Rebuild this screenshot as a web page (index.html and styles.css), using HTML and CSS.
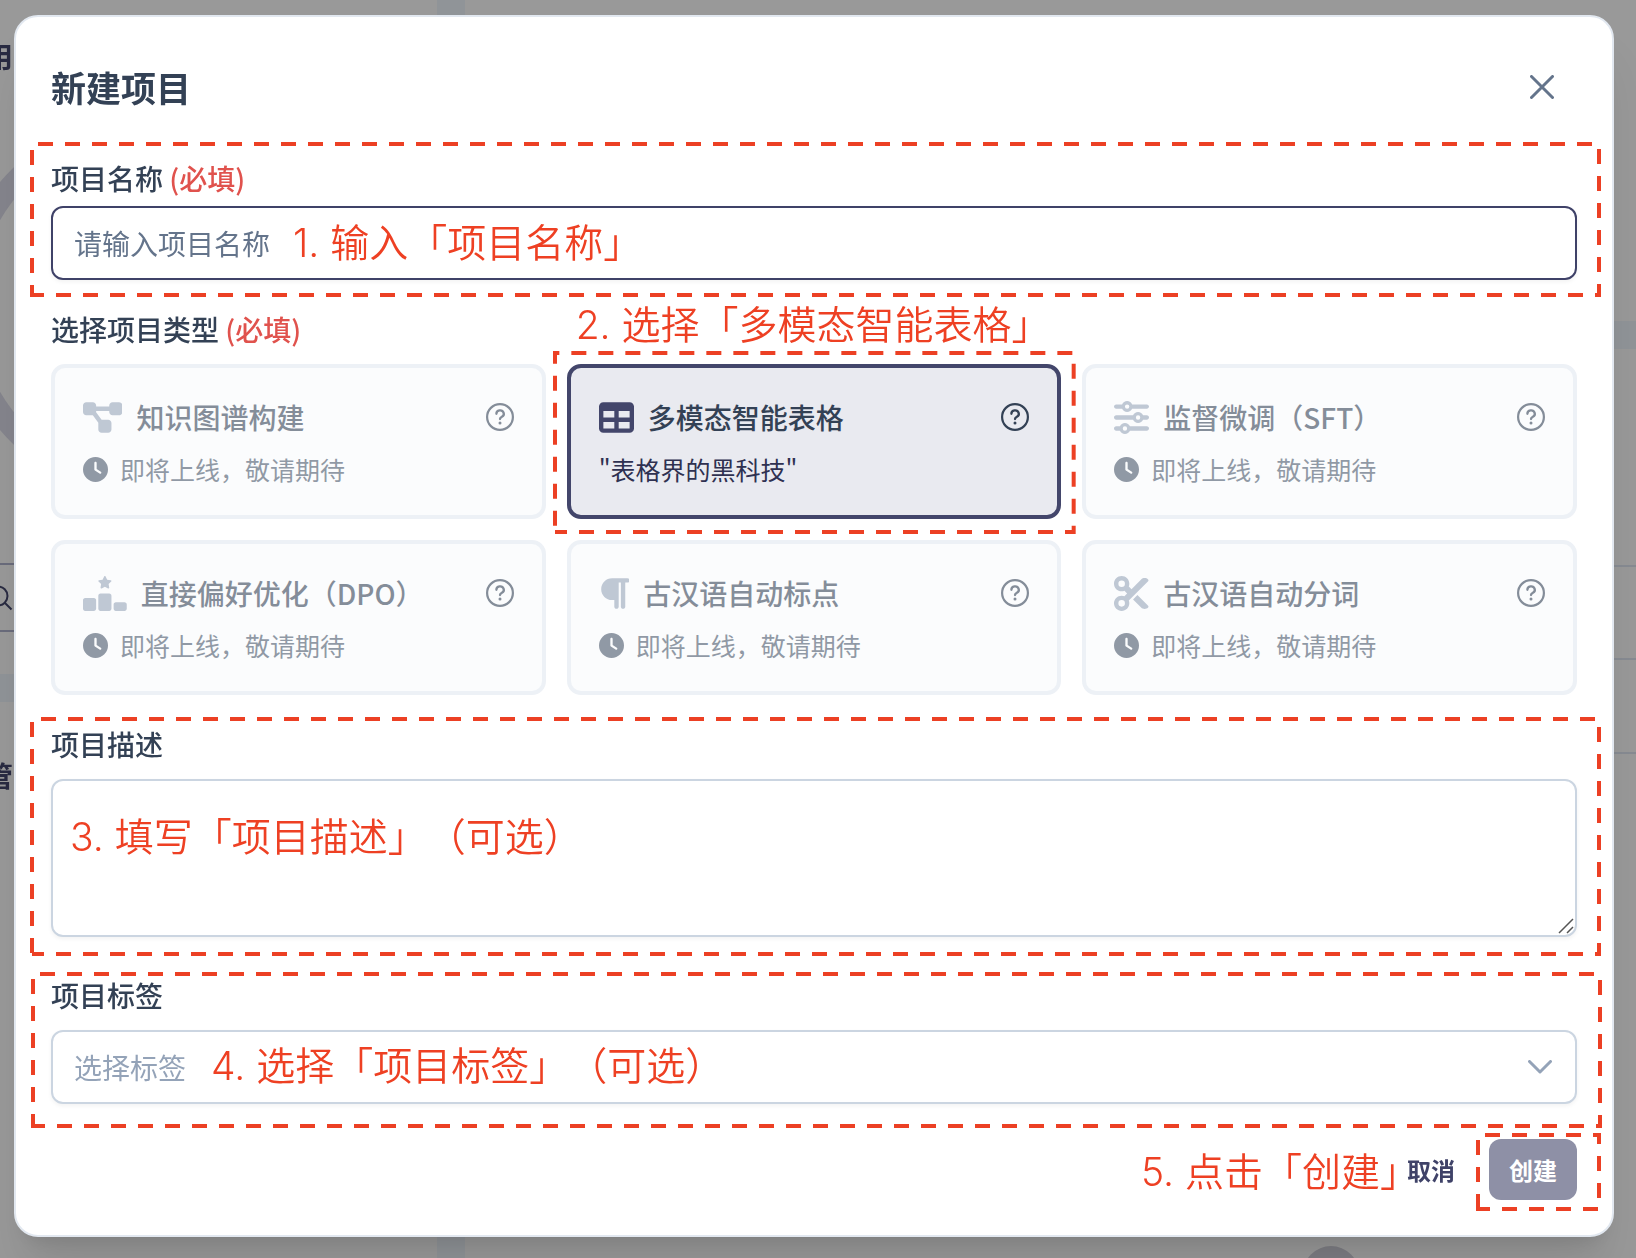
FILE: index.html
```
<!DOCTYPE html>
<html lang="zh-CN">
<head>
    <meta charset="UTF-8">
    <meta name="viewport" content="width=device-width, initial-scale=1.0">
    <title>新建项目</title>
    <link rel="stylesheet" href="styles.css">
</head>
<body>

    <!-- Page behind the dialog -->
    <div class="backdrop" aria-hidden="true">
        <span class="column-gap"></span>
        <span class="ring"></span>
        <span class="left-strip"></span>
        <span class="right-strip"></span>
        <span class="right-line line-one"></span>
        <span class="right-line line-two"></span>
        <span class="right-line line-three"></span>
        <span class="search-box">
            <svg viewBox="0 0 28 28"><circle cx="12" cy="12" r="9.500"/><path d="M18.500 18.500L25.500 25.500"/></svg>
        </span>
        <span class="back-text text-top">用</span>
        <span class="back-text text-middle">管</span>
        <span class="round-button"></span>
    </div>

    <!-- Shared icons -->
    <svg class="sprite" aria-hidden="true">
        <symbol id="icon-help" viewBox="0 0 14 14">
            <path d="M7 .55a6.450 6.450 0 1 0 0 12.900a6.450 6.450 0 0 0 0-12.900z" fill="none" stroke="currentColor" stroke-width="1.100"/>
            <path d="M5.200 5.400a1.850 1.700 0 1 1 2.750 1.450c-.650.350-.950.600-.950 1.200" fill="none" stroke="currentColor" stroke-width="1.150" stroke-linecap="round"/>
            <circle cx="7" cy="10" r=".75" fill="currentColor"/>
        </symbol>
        <symbol id="icon-clock" viewBox="0 0 512 512">
            <path fill="currentColor" d="M256 0a256 256 0 1 1 0 512A256 256 0 1 1 256 0zM232 120V256c0 8 4 15.500 10.700 20l96 64c11 7.400 25.900 4.400 33.300-6.700s4.400-25.900-6.700-33.300L280 243.200V120c0-13.300-10.700-24-24-24s-24 10.700-24 24z"/>
        </symbol>
    </svg>

    <div class="dialog" role="dialog" aria-labelledby="dialogTitle">
        <div class="dialog-header">
            <h2 id="dialogTitle">新建项目</h2>
            <button type="button" class="close-button" aria-label="关闭">
                <svg viewBox="0 0 24 24"><path d="M1.500 1.500L22.500 22.500M22.500 1.500L1.500 22.500"/></svg>
            </button>
        </div>

        <form class="dialog-form">
            <div class="field name-field">
                <label for="project-name">项目名称 <span class="required">(必填)</span></label>
                <input type="text" id="project-name" name="project-name" placeholder="请输入项目名称">
                <svg class="outline outline-name"><rect width="100%" height="100%"/></svg>
                <span class="note note-name">1. 输入「项目名称」</span>
            </div>

            <div class="field">
                <span class="label" id="typeLabel">选择项目类型 <span class="required">(必填)</span></span>
                <div class="type-grid" role="group" aria-labelledby="typeLabel">
                    <button type="button" class="type-card disabled">
                        <span class="card-title">
                            <svg class="card-icon" viewBox="0 0 576 512"><path d="M0 80C0 53.500 21.500 32 48 32h96c26.500 0 48 21.500 48 48V96H384V80c0-26.500 21.500-48 48-48h96c26.500 0 48 21.500 48 48v96c0 26.500-21.500 48-48 48H432c-26.500 0-48-21.500-48-48V160H192v16c0 1.700-.1 3.400-.3 5L272 288h96c26.500 0 48 21.500 48 48v96c0 26.500-21.500 48-48 48H272c-26.500 0-48-21.500-48-48V336c0-1.700 .1-3.400 .3-5L144 224H48c-26.500 0-48-21.500-48-48V80z"/></svg>
                            <span>知识图谱构建</span>
                            <svg class="help"><use href="#icon-help"/></svg>
                        </span>
                        <span class="card-text"><svg class="clock"><use href="#icon-clock"/></svg>即将上线，敬请期待</span>
                    </button>

                    <div class="highlight">
                        <button type="button" class="type-card selected">
                            <span class="card-title">
                                <svg class="card-icon" viewBox="0 0 512 512"><path d="M64 256V160H224v96H64zm0 64H224v96H64V320zm224 96V320H448v96H288zM448 256H288V160H448v96zM64 32C28.700 32 0 60.700 0 96V416c0 35.300 28.700 64 64 64H448c35.300 0 64-28.700 64-64V96c0-35.300-28.700-64-64-64H64z"/></svg>
                                <span>多模态智能表格</span>
                                <svg class="help"><use href="#icon-help"/></svg>
                            </span>
                            <span class="card-text">"表格界的黑科技"</span>
                        </button>
                        <svg class="outline outline-card"><rect width="100%" height="100%"/></svg>
                        <span class="note note-type">2. 选择「多模态智能表格」</span>
                    </div>

                    <button type="button" class="type-card disabled">
                        <span class="card-title">
                            <svg class="card-icon" viewBox="0 0 512 512"><path d="M0 416c0 17.700 14.300 32 32 32l54.700 0c12.300 28.300 40.500 48 73.300 48s61-19.700 73.300-48L480 448c17.700 0 32-14.300 32-32s-14.300-32-32-32l-246.700 0c-12.300-28.300-40.500-48-73.300-48s-61 19.700-73.300 48L32 384c-17.700 0-32 14.300-32 32zm128 0a32 32 0 1 1 64 0 32 32 0 1 1 -64 0zM320 256a32 32 0 1 1 64 0 32 32 0 1 1 -64 0zm32-80c-32.800 0-61 19.700-73.300 48L32 224c-17.700 0-32 14.300-32 32s14.300 32 32 32l246.700 0c12.300 28.300 40.500 48 73.300 48s61-19.700 73.300-48l54.700 0c17.700 0 32-14.300 32-32s-14.300-32-32-32l-54.700 0c-12.300-28.300-40.500-48-73.300-48zM192 128a32 32 0 1 1 0-64 32 32 0 1 1 0 64zm73.300-64C253 35.700 224.800 16 192 16s-61 19.700-73.300 48L32 64C14.300 64 0 78.300 0 96s14.300 32 32 32l86.700 0c12.300 28.300 40.500 48 73.300 48s61-19.700 73.300-48L480 128c17.700 0 32-14.300 32-32s-14.300-32-32-32L265.300 64z"/></svg>
                            <span>监督微调（SFT）</span>
                            <svg class="help"><use href="#icon-help"/></svg>
                        </span>
                        <span class="card-text"><svg class="clock"><use href="#icon-clock"/></svg>即将上线，敬请期待</span>
                    </button>

                    <button type="button" class="type-card disabled">
                        <span class="card-title">
                            <svg class="card-icon" viewBox="0 0 640 512"><path d="M353.800 54.100L330.200 6.300c-3.900-8.300-16.100-8.600-20.400 0L286.200 54.100l-52.300 7.500c-9.300 1.400-13.300 12.900-6.400 19.800l38 37-9 52.100c-1.400 9.300 8.200 16.500 16.800 12.200l46.900-24.800 46.600 24.400c8.600 4.300 18.300-2.900 16.800-12.200l-9-52.100 38-36.600c6.800-6.800 2.900-18.300-6.400-19.800l-52.300-7.500zM256 256c-17.700 0-32 14.300-32 32V480c0 17.700 14.300 32 32 32H384c17.700 0 32-14.300 32-32V288c0-17.700-14.300-32-32-32H256zM32 320c-17.700 0-32 14.300-32 32V480c0 17.700 14.300 32 32 32H160c17.700 0 32-14.300 32-32V352c0-17.700-14.300-32-32-32H32zm416 96v64c0 17.700 14.300 32 32 32H608c17.700 0 32-14.300 32-32V416c0-17.700-14.300-32-32-32H480c-17.700 0-32 14.300-32 32z"/></svg>
                            <span>直接偏好优化（DPO）</span>
                            <svg class="help"><use href="#icon-help"/></svg>
                        </span>
                        <span class="card-text"><svg class="clock"><use href="#icon-clock"/></svg>即将上线，敬请期待</span>
                    </button>

                    <button type="button" class="type-card disabled">
                        <span class="card-title">
                            <svg class="card-icon" viewBox="0 0 448 512"><path d="M192 32h64H416c17.700 0 32 14.300 32 32s-14.300 32-32 32H384l0 352c0 17.700-14.300 32-32 32s-32-14.300-32-32l0-352H288V448c0 17.700-14.300 32-32 32s-32-14.300-32-32V352H192c-88.400 0-160-71.600-160-160s71.600-160 160-160z"/></svg>
                            <span>古汉语自动标点</span>
                            <svg class="help"><use href="#icon-help"/></svg>
                        </span>
                        <span class="card-text"><svg class="clock"><use href="#icon-clock"/></svg>即将上线，敬请期待</span>
                    </button>

                    <button type="button" class="type-card disabled">
                        <span class="card-title">
                            <svg class="card-icon" viewBox="0 0 512 512"><path d="M256 192l-39.500-39.500c4.900-12.600 7.500-26.200 7.500-40.500C224 50.100 173.900 0 112 0S0 50.100 0 112s50.100 112 112 112c14.300 0 27.900-2.700 40.500-7.500L192 256l-39.500 39.500c-12.600-4.900-26.200-7.500-40.500-7.500C50.100 288 0 338.100 0 400s50.100 112 112 112s112-50.100 112-112c0-14.300-2.700-27.900-7.500-40.500L499.200 76.800c7.100-7.100 7.100-18.500 0-25.600c-28.300-28.300-74.100-28.300-102.400 0L256 192zm22.600 150.600L396.800 460.800c28.300 28.300 74.100 28.300 102.400 0c7.100-7.100 7.100-18.500 0-25.600L342.600 278.600l-64 64zM64 112a48 48 0 1 1 96 0 48 48 0 1 1 -96 0zm48 240a48 48 0 1 1 0 96 48 48 0 1 1 0-96z"/></svg>
                            <span>古汉语自动分词</span>
                            <svg class="help"><use href="#icon-help"/></svg>
                        </span>
                        <span class="card-text"><svg class="clock"><use href="#icon-clock"/></svg>即将上线，敬请期待</span>
                    </button>
                </div>
            </div>

            <div class="field description-field">
                <label for="description">项目描述</label>
                <textarea id="description" name="description"></textarea>
                <svg class="resize-mark" viewBox="0 0 16 16"><path d="M1 15L15 1M9 15L15 9"/></svg>
                <svg class="outline outline-description"><rect width="100%" height="100%"/></svg>
                <span class="note note-description">3. 填写「项目描述」（可选）</span>
            </div>

            <div class="field tag-field">
                <label for="tags">项目标签</label>
                <select id="tags" name="tags">
                    <option>选择标签</option>
                </select>
                <svg class="chevron" viewBox="0 0 24 14"><path d="M1.500 1.500L12 12L22.500 1.500"/></svg>
                <svg class="outline outline-tags"><rect width="100%" height="100%"/></svg>
                <span class="note note-tags">4. 选择「项目标签」（可选）</span>
            </div>

            <div class="dialog-footer">
                <span class="note note-create">5. 点击「创建」</span>
                <button type="button" class="cancel-button">取消</button>
                <div class="highlight">
                    <button type="submit" class="create-button">创建</button>
                    <svg class="outline outline-create"><rect width="100%" height="100%"/></svg>
                </div>
            </div>
        </form>
    </div>

</body>
</html>
```
FILE: styles.css
```
* {
    box-sizing: border-box;
}

body {
    font-family: "Noto Sans CJK SC", "Noto Sans", sans-serif;
    font-size: 28px;
    line-height: 42px;
    margin: 0;
    padding: 15px 22px 21px 14px;
    min-height: 100vh;
    overflow-x: hidden;
    background-color: #999;
    color: #334155;
}

button, input, textarea, select {
    font-family: inherit;
    font-size: inherit;
    line-height: inherit;
}

.sprite {
    display: none;
}

/* dimmed page */
.backdrop {
    position: fixed;
    inset: 0;
    overflow: hidden;
}

.backdrop span {
    position: absolute;
}

.backdrop .column-gap {
    top: 0;
    bottom: 0;
    left: 437px;
    width: 28px;
    background-color: #909498;
}

.backdrop .ring {
    top: 113px;
    left: -45px;
    width: 386px;
    height: 386px;
    border: 22px solid #85858d;
    border-radius: 50%;
}

.backdrop .left-strip {
    top: 674px;
    left: 0;
    width: 437px;
    height: 28px;
    background-color: #909498;
}

.backdrop .right-strip {
    top: 321px;
    right: 0;
    width: 200px;
    height: 28px;
    background-color: #909498;
}

.backdrop .right-line {
    right: 0;
    width: 200px;
    height: 2px;
    background-color: #878b92;
}

.backdrop .line-one {
    top: 565px;
}

.backdrop .line-two {
    top: 658px;
}

.backdrop .line-three {
    top: 752px;
}

.backdrop .search-box {
    top: 563px;
    left: -40px;
    width: 300px;
    height: 69px;
    border: 2px solid #6a6c7c;
}

.search-box svg {
    position: absolute;
    top: 19px;
    left: 24px;
    width: 28px;
    height: 28px;
    fill: none;
    stroke: #292b42;
    stroke-width: 2;
}

.backdrop .back-text {
    font-weight: 700;
    color: #292b42;
}

.backdrop .text-top {
    top: 35px;
    left: -15px;
}

.backdrop .text-middle {
    top: 754px;
    left: -15px;
}

.backdrop .round-button {
    left: 1303px;
    top: 1246px;
    width: 56px;
    height: 56px;
    border-radius: 50%;
    background-color: #7d7d83;
}

/* dialog */
.dialog {
    position: relative;
    background-color: #fff;
    border: 2px solid #e2e8f0;
    border-radius: 24px;
    box-shadow: 0 40px 50px -10px rgba(0, 0, 0, 0.1), 0 16px 20px -12px rgba(0, 0, 0, 0.1);
}

.dialog-header {
    display: flex;
    justify-content: space-between;
    align-items: center;
    padding: 35px;
}

.dialog-header h2 {
    margin: 0;
    font-size: 35px;
    font-weight: 700;
}

.close-button {
    display: flex;
    justify-content: center;
    align-items: center;
    width: 70px;
    height: 70px;
    padding: 0;
    border: none;
    background: none;
    cursor: pointer;
}

.close-button svg {
    width: 24px;
    height: 24px;
    stroke: #64748b;
    stroke-width: 3;
    stroke-linecap: round;
}

.dialog-form {
    display: flex;
    flex-direction: column;
    gap: 28px;
    padding: 0 35px 35px;
}

.field {
    position: relative;
    display: flex;
    flex-direction: column;
    gap: 14px;
}

.name-field {
    gap: 7px;
}

.tag-field {
    margin-top: 9px;
}

.field label, .label {
    font-weight: 500;
}

.required {
    color: #e0524d;
}

input, textarea, select {
    width: 100%;
    border: 2px solid #cbd5e1;
    border-radius: 12px;
    background-color: #fff;
    padding: 14px 21px;
    color: #334155;
    outline: none;
    box-shadow: 0 2px 4px rgba(18, 18, 23, 0.05);
}

input {
    height: 74px;
    border-color: #3f4268;
}

input::placeholder {
    color: #64748b;
    opacity: 1;
}

textarea {
    height: 158px;
    resize: none;
}

select {
    height: 74px;
    appearance: none;
    color: #94a3b8;
}

.resize-mark {
    position: absolute;
    right: 3px;
    bottom: 3px;
    width: 16px;
    height: 16px;
    stroke: #555;
    stroke-width: 1.5;
    pointer-events: none;
}

.chevron {
    position: absolute;
    right: 25px;
    bottom: 30px;
    width: 24px;
    height: 14px;
    fill: none;
    stroke: #94a3b8;
    stroke-width: 3;
    stroke-linecap: round;
    stroke-linejoin: round;
    pointer-events: none;
}

/* project type cards */
.type-grid {
    display: grid;
    grid-template-columns: repeat(3, 1fr);
    gap: 21px;
}

.highlight {
    position: relative;
    display: flex;
}

.type-card {
    display: flex;
    flex-direction: column;
    gap: 14px;
    width: 100%;
    padding: 28px;
    border: 4px solid #e2e8f0;
    border-radius: 14px;
    background-color: #f8fafc;
    color: #334155;
    text-align: left;
    cursor: pointer;
}

.type-card.disabled {
    opacity: 0.6;
    cursor: not-allowed;
}

.type-card.selected {
    border-color: #43466b;
    background-color: #e9eaf0;
}

.card-title {
    display: flex;
    align-items: center;
    gap: 14px;
    width: 100%;
    height: 42px;
    font-weight: 500;
}

.card-icon {
    height: 35px;
    fill: #43466b;
}

.disabled .card-icon {
    fill: #94a3b8;
}

.help {
    width: 28px;
    height: 28px;
    margin-left: auto;
}

.card-text {
    display: flex;
    align-items: center;
    gap: 12px;
    font-size: 25px;
    line-height: 35px;
    color: #2f3151;
}

.disabled .card-text {
    color: #475569;
}

.clock {
    width: 25px;
    height: 25px;
}

/* footer */
.dialog-footer {
    position: relative;
    display: flex;
    justify-content: flex-end;
    align-items: center;
    margin-top: 7px;
    font-size: 24px;
}

.cancel-button, .create-button {
    height: 61px;
    border: none;
    border-radius: 12px;
    background: none;
    font-weight: 700;
    cursor: pointer;
}

.cancel-button {
    padding: 0 34px;
    color: #3f4268;
}

.create-button {
    padding: 0 20px;
    background-color: #8e90a6;
    color: #fff;
}

/* step marks */
.outline {
    position: absolute;
    overflow: visible;
    transform: scaleY(-1);
    pointer-events: none;
}

.outline rect {
    fill: none;
    stroke: #ec4024;
    stroke-width: 4;
    stroke-dasharray: 15 12;
    stroke-dashoffset: 3;
}

.outline-name {
    top: -13px;
    left: -19px;
    width: calc(100% + 41px);
    height: calc(100% + 28px);
}

.outline-card {
    top: -11px;
    left: -12px;
    width: calc(100% + 24px);
    height: calc(100% + 24px);
}

.outline-description {
    top: -4px;
    left: -19px;
    width: calc(100% + 41px);
    height: calc(100% + 21px);
}

.outline-tags {
    top: 0;
    left: -18px;
    width: calc(100% + 41px);
    height: calc(100% + 22px);
}

.outline-create {
    top: -4px;
    left: -11px;
    width: calc(100% + 33px);
    height: calc(100% + 13px);
}

.note {
    position: absolute;
    font-family: Inter, "Noto Sans CJK SC", sans-serif;
    font-size: 39px;
    font-weight: 350;
    line-height: 56px;
    color: #ee4023;
    white-space: nowrap;
    text-spacing-trim: space-all;
    pointer-events: none;
}

.note-name {
    left: 242px;
    bottom: 9px;
}

.note-type {
    left: 9px;
    bottom: 166px;
}

.note-description {
    left: 19px;
    bottom: 72px;
}

.note-tags {
    left: 160px;
    bottom: 10px;
}

.note-create {
    right: 158px;
    bottom: 0;
}
```
